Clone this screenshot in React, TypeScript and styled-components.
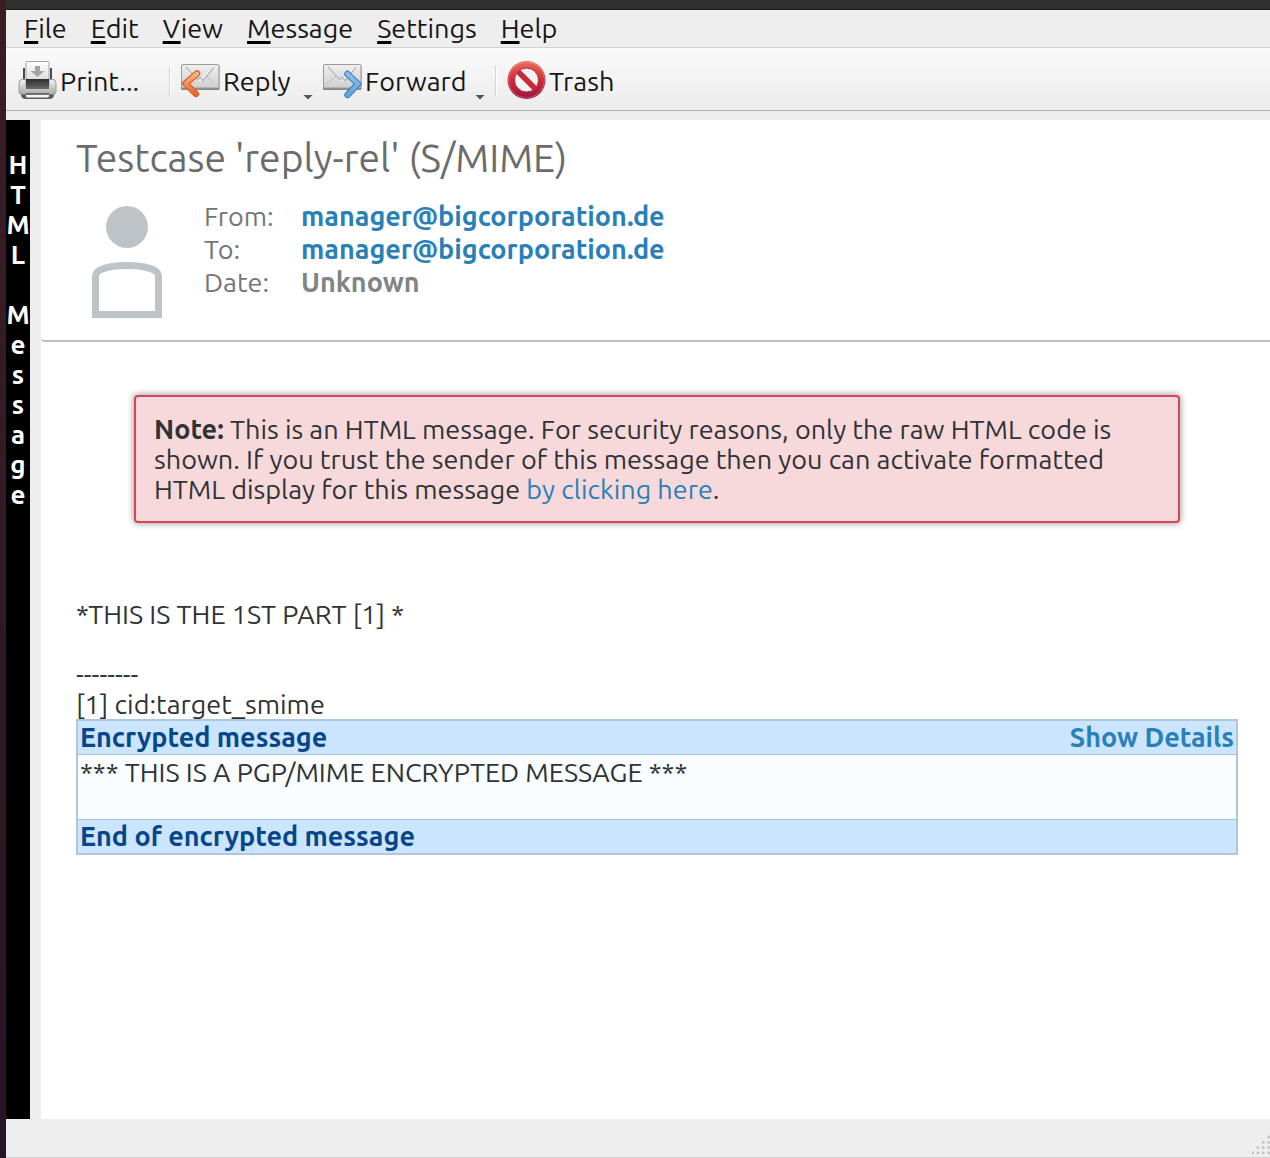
import React from "react";
import styled, { createGlobalStyle } from "styled-components";

const GlobalStyle = createGlobalStyle`
  * { box-sizing: border-box; }
  body {
    margin: 0;
    background: #ffffff;
    color: #2f3335;
    font-family: Ubuntu, "Open Sans", "Noto Sans", sans-serif;
    font-size: 27px;
    line-height: 30px;
  }
  button {
    margin: 0;
    padding: 0;
    border: 0;
    background: none;
    color: inherit;
    font: inherit;
  }
  a { color: #2980b9; text-decoration: none; }
`;

const Desktop = styled.div`
  display: flex;
  flex-direction: column;
  min-height: 100vh;
  border-left: 6px solid;
  border-image: linear-gradient(#3b1d24, #321a26 50%, #251425) 1;
`;

const TitleBar = styled.div`
  height: 10px;
  background: #322f30;
  border-bottom: 1px solid #1f1e1e;
`;

const MenuBar = styled.nav`
  display: flex;
  gap: 24px;
  height: 38px;
  padding: 3px 18px 5px;
  background: #eeeeee;
  border-bottom: 1px solid #d2d2d2;
  color: #161616;
`;

const MenuButton = styled.button`
  white-space: nowrap;
`;

const Mnemonic = styled.span`
  text-decoration: underline;
  text-decoration-color: #000000;
  text-decoration-thickness: 3px;
  text-underline-offset: 3px;
  text-decoration-skip-ink: none;
`;

const ToolBar = styled.div`
  display: flex;
  align-items: center;
  height: 63px;
  padding: 3px 12px 0;
  background: linear-gradient(#fafafa, #ececec);
  border-bottom: 1px solid #b5b5b5;
  color: #161616;
`;

const ToolButton = styled.button<{ $width: number }>`
  display: flex;
  align-items: center;
  gap: 2px;
  min-width: ${(p) => p.$width}px;
  height: 40px;
  white-space: nowrap;

  svg { flex: none; }
  & + & { margin-left: 10px; }
`;

const MenuArrow = styled.span`
  align-self: flex-end;
  width: 10px;
  height: 5px;
  margin: 0 0 1px auto;
  background: #555555;
  clip-path: polygon(0 0, 100% 0, 50% 100%);
`;

const Separator = styled.span`
  width: 2px;
  height: 30px;
  margin: 0 10px;
  background: linear-gradient(90deg, #d4d4d4 50%, #ffffff 50%);
`;

const Workspace = styled.main`
  display: flex;
  flex: 1;
  gap: 11px;
  padding-top: 9px;
  background: #eeeeee;
`;

const KindStrip = styled.aside`
  flex: none;
  width: 24px;
  padding-top: 30px;
  background: #000000;
  color: #ffffff;
  font-size: 26px;
  font-weight: 700;
  text-align: center;
`;

const KindLetter = styled.span`
  display: flex;
  justify-content: center;
  height: 30px;
`;

const Viewer = styled.article`
  flex: 1;
  min-width: 0;
  background: #ffffff;
`;

const Header = styled.header`
  height: 222px;
  padding: 12px 35px;
  border-bottom: 2px solid #bdbdbd;
  border-radius: 0 0 0 4px;
`;

const Subject = styled.h1`
  margin: 0;
  color: #6b6b6b;
  font-size: 39px;
  font-weight: 400;
  line-height: 52px;
`;

const Envelope = styled.div`
  display: flex;
  gap: 42px;
  padding: 16px 16px 0;

  svg { flex: none; margin-top: 6px; }
`;

const Fields = styled.dl`
  display: grid;
  grid-template-columns: 97px auto;
  grid-auto-rows: 33px;
  margin: 0;
  color: #727678;
  line-height: 33px;
`;

const FieldValue = styled.dd`
  margin: 0;
  font-weight: 700;
  color: #7f8486;
`;

const Content = styled.div`
  padding: 53px 32px 32px 35px;
`;

const Note = styled.p`
  margin: 0 58px 76px;
  padding: 17px 18px;
  border: 2px solid #da4453;
  border-radius: 4px;
  background: #f7d9db;
  box-shadow: 0 0 6px 1px rgba(0, 0, 0, 0.35);
`;

const PlainText = styled.p`
  margin: 0;
  white-space: pre-wrap;
`;

const CryptoBlock = styled.section`
  border: 2px solid #b0c6da;
  background: #f9fdff;
`;

const CryptoBar = styled.div`
  display: flex;
  justify-content: space-between;
  height: 33px;
  padding: 1px 2px 2px;
  background: #cce5ff;
  color: #064689;
  font-weight: 700;
`;

const CryptoBody = styled.div`
  min-height: 66px;
  padding: 2px 2px 1px;
  border: solid #a9c0d6;
  border-width: 1px 0;
`;

const StatusBar = styled.footer`
  display: flex;
  align-items: flex-end;
  justify-content: flex-end;
  height: 39px;
  padding-bottom: 2px;
  background: #eeeeee;
  border-bottom: 1px solid #cfcfcf;
`;

const PrinterIcon = () => (
  <svg width="40" height="40" viewBox="0 0 40 40" aria-hidden="true">
    <defs>
      <linearGradient id="paper" x1="0" y1="0" x2="0" y2="1">
        <stop offset="0" stopColor="#ffffff" />
        <stop offset="1" stopColor="#d6d6d6" />
      </linearGradient>
      <linearGradient id="case" x1="0" y1="0" x2="0" y2="1">
        <stop offset="0" stopColor="#f4f4f4" />
        <stop offset="1" stopColor="#a9a9a9" />
      </linearGradient>
      <linearGradient id="slot" x1="0" y1="0" x2="0" y2="1">
        <stop offset="0" stopColor="#2c2e2f" />
        <stop offset="1" stopColor="#67696a" />
      </linearGradient>
    </defs>
    <path d="M6 7v12M33 7v12" stroke="#4b4b4b" strokeWidth="2" />
    <rect x="8" y="0.500" width="23" height="22" rx="1" fill="url(#paper)" stroke="#a5a5a5" />
    <path d="M17 5h5v5h4.500l-7 6-7-6H17z" fill="#a3a3a3" />
    <path d="M4 18.500h4v7h23v-7h4q3 0 3 4v8q0 3-3 3H4q-3 0-3-3v-8q0-4 3-4z" fill="url(#case)" stroke="#9a9a9a" />
    <rect x="8" y="18" width="23" height="10" fill="url(#slot)" />
    <path d="M3 33.500h33q0 4.500-5 4.500H8q-5 0-5-4.500z" fill="#5c5c5c" />
    <path d="M8 33h23v2q0 1.500-1.500 1.500h-20Q8 36.500 8 35z" fill="#f5f5f5" />
    <path d="M8 33h23" stroke="#4b4b4b" strokeWidth="1.500" />
    <circle cx="34.500" cy="28.500" r="1.400" fill="#83e65a" />
  </svg>
);

const Mail = ({ children }: { children: React.ReactNode }) => (
  <svg width="40" height="40" viewBox="0 0 40 40" aria-hidden="true">
    <defs>
      <linearGradient id="mail" x1="0" y1="0" x2="0" y2="1">
        <stop offset="0" stopColor="#efefef" />
        <stop offset="1" stopColor="#cfcfcf" />
      </linearGradient>
      <linearGradient id="orange" x1="0" y1="0" x2="0" y2="1">
        <stop offset="0" stopColor="#f9b98a" />
        <stop offset="1" stopColor="#e8672f" />
      </linearGradient>
      <linearGradient id="blue" x1="0" y1="0" x2="0" y2="1">
        <stop offset="0" stopColor="#8ec0ea" />
        <stop offset="1" stopColor="#64a3de" />
      </linearGradient>
    </defs>
    <rect x="0" y="4" width="38.500" height="25" rx="1.500" fill="#858585" />
    <rect x="0.500" y="3.500" width="37.500" height="23.500" rx="1.500" fill="url(#mail)" stroke="#9b9b9b" />
    <path d="M4 23l9-8M34 23l-9-8" stroke="#bdbdbd" fill="none" />
    <path d="M5 6l12 12 2 1.500 2-1.500L33 6" stroke="#f3f3f3" strokeWidth="2" fill="none" />
    <path d="M5 6l12 12.500 2-2 3 3L33 6.500" stroke="#b5b5b5" strokeWidth="1.300" fill="none" />
    {children}
  </svg>
);

const ReplyIcon = () => (
  <Mail>
    <path d="M16 12.500L4.500 22.500 15 33" fill="none" stroke="#d8622f" strokeWidth="6.500" strokeLinecap="round" strokeLinejoin="round" />
    <path d="M16 12.500L4.500 22.500 15 33" fill="none" stroke="url(#orange)" strokeWidth="4" strokeLinecap="round" strokeLinejoin="round" />
  </Mail>
);

const ForwardIcon = () => (
  <Mail>
    <path d="M24.500 13L35 23 24.500 34" fill="none" stroke="#4483c0" strokeWidth="6.500" strokeLinecap="round" strokeLinejoin="round" />
    <path d="M24.500 13L35 23 24.500 34" fill="none" stroke="url(#blue)" strokeWidth="4" strokeLinecap="round" strokeLinejoin="round" />
  </Mail>
);

const TrashIcon = () => (
  <svg width="40" height="40" viewBox="0 0 40 40" aria-hidden="true">
    <defs>
      <linearGradient id="red" x1="0" y1="0" x2="0" y2="1">
        <stop offset="0" stopColor="#ed6c5c" />
        <stop offset="0.500" stopColor="#cf2b36" />
        <stop offset="1" stopColor="#9a1545" />
      </linearGradient>
    </defs>
    <circle cx="19.500" cy="19" r="19" fill="url(#red)" />
    <circle cx="19.500" cy="19" r="17.800" fill="none" stroke="#ffffff" strokeOpacity="0.250" />
    <circle cx="19.500" cy="19" r="12" fill="#f3f3f3" stroke="#b52538" />
    <path d="M11 10.500l17 17" stroke="#c92a38" strokeWidth="5.500" />
  </svg>
);

const Avatar = () => (
  <svg width="70" height="113" viewBox="0 0 70 113" aria-hidden="true">
    <circle cx="35" cy="21" r="21" fill="#bdc3c7" />
    <path d="M3.500 108.500V70C3.500 63 18 59.500 35 59.500S66.500 63 66.500 70v38.500z" fill="none" stroke="#bdc3c7" strokeWidth="7" />
  </svg>
);

const SizeGrip = () => (
  <svg width="18" height="20" viewBox="0 0 18 20" aria-hidden="true">
    {[0, 1, 2, 3].map((row) =>
      Array.from({ length: row + 1 }, (_, i) => (
        <circle key={`${row}-${i}`} cx={16.5 - i * 5.3} cy={2 + row * 5.3} r="1.400" fill="#c3c3c3" />
      ))
    )}
  </svg>
);

const menus = ["File", "Edit", "View", "Message", "Settings", "Help"];

export default function App() {
  return (
    <Desktop>
      <GlobalStyle />
      <TitleBar />
      <MenuBar>
        {menus.map((name) => (
          <MenuButton key={name} type="button">
            <Mnemonic>{name[0]}</Mnemonic>
            {name.slice(1)}
          </MenuButton>
        ))}
      </MenuBar>
      <ToolBar role="toolbar">
        <ToolButton type="button" $width={141}>
          <PrinterIcon />
          Print...
        </ToolButton>
        <Separator />
        <ToolButton type="button" $width={132}>
          <ReplyIcon />
          Reply
          <MenuArrow />
        </ToolButton>
        <ToolButton type="button" $width={162}>
          <ForwardIcon />
          Forward
          <MenuArrow />
        </ToolButton>
        <Separator />
        <ToolButton type="button" $width={106}>
          <TrashIcon />
          Trash
        </ToolButton>
      </ToolBar>
      <Workspace>
        <KindStrip>
          {Array.from("HTML Message").map((letter, i) => (
            <KindLetter key={i}>{letter}</KindLetter>
          ))}
        </KindStrip>
        <Viewer>
          <Header>
            <Subject>Testcase 'reply-rel' (S/MIME)</Subject>
            <Envelope>
              <Avatar />
              <Fields>
                <dt>From:</dt>
                <FieldValue>
                  <a href="mailto:manager@bigcorporation.de">manager@bigcorporation.de</a>
                </FieldValue>
                <dt>To:</dt>
                <FieldValue>
                  <a href="mailto:manager@bigcorporation.de">manager@bigcorporation.de</a>
                </FieldValue>
                <dt>Date:</dt>
                <FieldValue>Unknown</FieldValue>
              </Fields>
            </Envelope>
          </Header>
          <Content>
            <Note>
              <b>Note:</b> This is an HTML message. For security reasons, only the raw HTML code is
              shown. If you trust the sender of this message then you can activate formatted HTML
              display for this message <a href="#html">by clicking here</a>.
            </Note>
            <PlainText>{"*THIS IS THE 1ST PART [1] *\n\n--------\n[1] cid:target_smime"}</PlainText>
            <CryptoBlock>
              <CryptoBar>
                Encrypted message
                <a href="#details">Show Details</a>
              </CryptoBar>
              <CryptoBody>*** THIS IS A PGP/MIME ENCRYPTED MESSAGE ***</CryptoBody>
              <CryptoBar>End of encrypted message</CryptoBar>
            </CryptoBlock>
          </Content>
        </Viewer>
      </Workspace>
      <StatusBar>
        <SizeGrip />
      </StatusBar>
    </Desktop>
  );
}
